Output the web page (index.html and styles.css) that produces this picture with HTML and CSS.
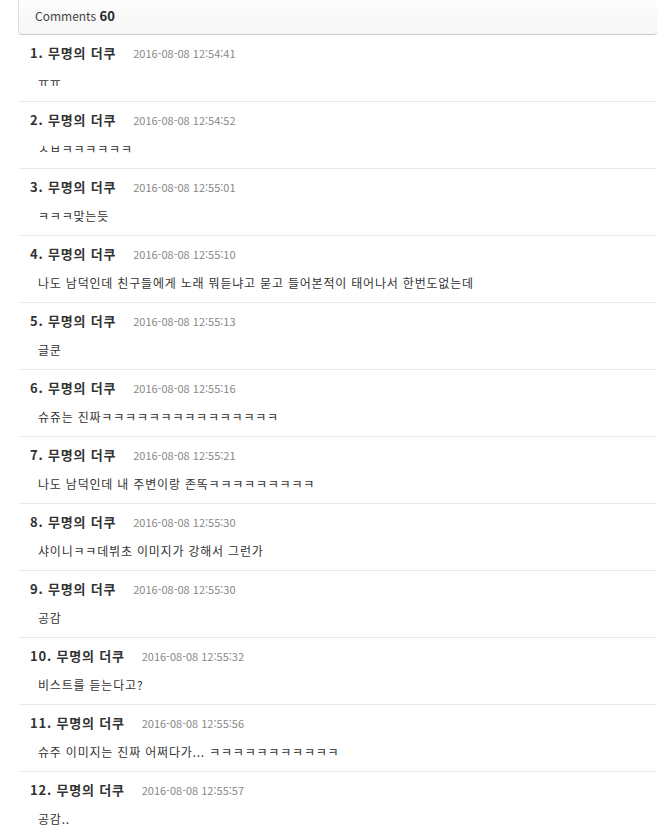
FILE: index.html
```html
<!DOCTYPE html>
<html lang="ko">
<head>
    <meta charset="UTF-8">
    <meta name="viewport" content="width=device-width, initial-scale=1.0">
    <title>Comments</title>
    <link rel="stylesheet" href="styles.css">
</head>
<body>
    <div class="comments">
        <!-- Header -->
        <div class="comments-head">
            Comments <strong>60</strong>
        </div>

        <!-- Comment list -->
        <ul class="comment-list">
            <li class="comment">
                <div class="comment-meta"><span class="comment-name">1. 무명의 더쿠</span><span class="comment-date">2016-08-08 12:54:41</span></div>
                <div class="comment-text">ㅠㅠ</div>
            </li>
            <li class="comment">
                <div class="comment-meta"><span class="comment-name">2. 무명의 더쿠</span><span class="comment-date">2016-08-08 12:54:52</span></div>
                <div class="comment-text">ㅅㅂㅋㅋㅋㅋㅋㅋ</div>
            </li>
            <li class="comment">
                <div class="comment-meta"><span class="comment-name">3. 무명의 더쿠</span><span class="comment-date">2016-08-08 12:55:01</span></div>
                <div class="comment-text">ㅋㅋㅋ맞는듯</div>
            </li>
            <li class="comment">
                <div class="comment-meta"><span class="comment-name">4. 무명의 더쿠</span><span class="comment-date">2016-08-08 12:55:10</span></div>
                <div class="comment-text">나도 남덕인데 친구들에게 노래 뭐듣냐고 묻고 들어본적이 태어나서 한번도없는데</div>
            </li>
            <li class="comment">
                <div class="comment-meta"><span class="comment-name">5. 무명의 더쿠</span><span class="comment-date">2016-08-08 12:55:13</span></div>
                <div class="comment-text">글쿤</div>
            </li>
            <li class="comment">
                <div class="comment-meta"><span class="comment-name">6. 무명의 더쿠</span><span class="comment-date">2016-08-08 12:55:16</span></div>
                <div class="comment-text">슈쥬는 진짜ㅋㅋㅋㅋㅋㅋㅋㅋㅋㅋㅋㅋㅋㅋㅋ</div>
            </li>
            <li class="comment">
                <div class="comment-meta"><span class="comment-name">7. 무명의 더쿠</span><span class="comment-date">2016-08-08 12:55:21</span></div>
                <div class="comment-text">나도 남덕인데 내 주변이랑 존똑ㅋㅋㅋㅋㅋㅋㅋㅋㅋ</div>
            </li>
            <li class="comment">
                <div class="comment-meta"><span class="comment-name">8. 무명의 더쿠</span><span class="comment-date">2016-08-08 12:55:30</span></div>
                <div class="comment-text">샤이니ㅋㅋ데뷔초 이미지가 강해서 그런가</div>
            </li>
            <li class="comment">
                <div class="comment-meta"><span class="comment-name">9. 무명의 더쿠</span><span class="comment-date">2016-08-08 12:55:30</span></div>
                <div class="comment-text">공감</div>
            </li>
            <li class="comment">
                <div class="comment-meta"><span class="comment-name">10. 무명의 더쿠</span><span class="comment-date">2016-08-08 12:55:32</span></div>
                <div class="comment-text">비스트를 듣는다고?</div>
            </li>
            <li class="comment">
                <div class="comment-meta"><span class="comment-name">11. 무명의 더쿠</span><span class="comment-date">2016-08-08 12:55:56</span></div>
                <div class="comment-text">슈주 이미지는 진짜 어쩌다가... ㅋㅋㅋㅋㅋㅋㅋㅋㅋㅋㅋ</div>
            </li>
            <li class="comment">
                <div class="comment-meta"><span class="comment-name">12. 무명의 더쿠</span><span class="comment-date">2016-08-08 12:55:57</span></div>
                <div class="comment-text">공감..</div>
            </li>
        </ul>
    </div>
</body>
</html>
```

FILE: styles.css
```css
body {
    margin: 0;
    padding: 0;
    background: #fff;
    color: #333;
    font-family: "Noto Sans CJK KR", "Noto Sans", sans-serif;
}
.comments {
    margin-left: 18px;
}
.comments-head {
    height: 35px;
    line-height: 31px;
    padding-left: 16px;
    font-size: 12px;
    color: #444;
    background: linear-gradient(#fdfdfd, #f6f6f6);
    border-left: 1px solid #ddd;
    border-bottom: 1px solid #c8c8c8;
    border-radius: 0 0 4px 4px;
    box-sizing: border-box;
}
.comments-head strong {
    color: #222;
    font-size: 13px;
}
.comment-list {
    list-style: none;
    margin: 0;
    padding: 0 0 0 1px;
}
.comment {
    height: 60px;
    padding: 6px 0 0 11px;
    border-bottom: 1px solid #e8e8e8;
}
.comment-meta {
    height: 20px;
    line-height: 20px;
}
.comment-name {
    font-size: 13px;
    font-weight: bold;
    color: #333;
    letter-spacing: 0.8px;
}
.comment-date {
    margin-left: 17px;
    font-size: 11px;
    color: #888;
}
.comment-text {
    margin-top: 11px;
    padding-left: 8px;
    line-height: 20px;
    font-size: 12px;
    color: #333;
    letter-spacing: 0.8px;
}
```
